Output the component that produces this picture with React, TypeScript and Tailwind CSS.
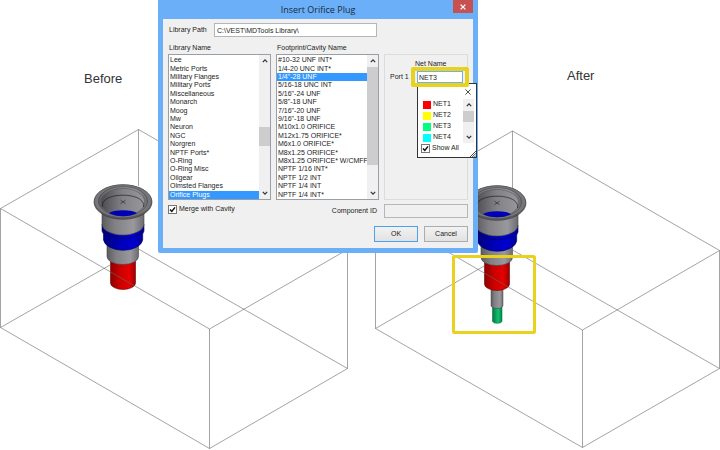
import { useState } from "react";

const libraries = [
  "Lee",
  "Metric Ports",
  "Military Flanges",
  "Military Ports",
  "Miscellaneous",
  "Monarch",
  "Moog",
  "Mw",
  "Neuron",
  "NGC",
  "Norgren",
  "NPTF Ports*",
  "O-Ring",
  "O-Ring Misc",
  "Oilgear",
  "Olmsted Flanges",
  "Orifice Plugs",
];

const footprints = [
  "#10-32 UNF INT*",
  "1/4-20 UNC INT*",
  "1/4\"-28 UNF",
  "5/16-18 UNC INT",
  "5/16\"-24 UNF",
  "5/8\"-18 UNF",
  "7/16\"-20 UNF",
  "9/16\"-18 UNF",
  "M10x1.0 ORIFICE",
  "M12x1.75 ORIFICE*",
  "M6x1.0 ORIFICE*",
  "M8x1.25 ORIFICE*",
  "M8x1.25 ORIFICE* W/CMFF",
  "NPTF 1/16 INT*",
  "NPTF 1/2 INT",
  "NPTF 1/4 INT",
  "NPTF 1/4 INT*",
];

const nets = [
  { name: "NET1", swatch: "bg-[#ff0000]" },
  { name: "NET2", swatch: "bg-[#ffff00]" },
  { name: "NET3", swatch: "bg-[#00ff80]" },
  { name: "NET4", swatch: "bg-[#00ffff]" },
];

const Chevron = ({ down = false }: { down?: boolean }) => (
  <svg viewBox="0 0 10 10" className="h-[10px] w-[10px]" fill="none" stroke="#333" strokeWidth="1.2">
    <path d={down ? "M2.8 3.8 5 6.2 7.2 3.8" : "M2.8 6.2 5 3.8 7.2 6.2"} />
  </svg>
);

const Scrollbar = ({ before, thumb }: { before: string; thumb: string }) => (
  <div className="flex w-[11px] shrink-0 flex-col items-center bg-[#f0f0f0]">
    <button type="button" aria-label="Scroll up" className="flex h-3 items-center">
      <Chevron />
    </button>
    <div className={before} />
    <div className={`w-full bg-[#cdcdcd] ${thumb}`} />
    <div className="flex-1" />
    <button type="button" aria-label="Scroll down" className="flex h-3 items-center">
      <Chevron down />
    </button>
  </div>
);

type ListBoxProps = {
  label: string;
  items: string[];
  initial: string;
  before: string;
  thumb: string;
};

const ListBox = ({ label, items, initial, before, thumb }: ListBoxProps) => {
  const [selected, setSelected] = useState(initial);

  return (
    <div className="min-w-0">
      <h2 className="h-[13px] px-px leading-[13px]">{label}</h2>
      <div className="flex h-[146px] border border-[#9a9ea6] bg-white">
        <ul role="listbox" aria-label={label} className="flex min-w-0 flex-1 flex-col pt-px">
          {items.map((item) => (
            <li
              key={item}
              role="option"
              aria-selected={item === selected}
              onClick={() => setSelected(item)}
              className={`flex min-h-0 flex-1 items-center overflow-hidden pl-px leading-[8px] whitespace-nowrap ${
                item === selected ? "bg-[#3399ff] text-white" : ""
              }`}
            >
              {item}
            </li>
          ))}
        </ul>
        <Scrollbar before={before} thumb={thumb} />
      </div>
    </div>
  );
};

const CheckBox = ({ label }: { label: string }) => (
  <label className="flex items-center gap-[2px]">
    <span className="grid h-[9px] w-[9px] place-items-center">
      <input
        type="checkbox"
        defaultChecked
        className="peer col-start-1 row-start-1 h-[9px] w-[9px] appearance-none border border-[#777] bg-white"
      />
      <svg
        viewBox="0 0 9 9"
        className="pointer-events-none invisible col-start-1 row-start-1 h-[9px] w-[9px] peer-checked:visible"
        fill="none"
        stroke="#111"
        strokeWidth="1.5"
      >
        <path d="M2 4.4 3.8 6.4 7 2.4" />
      </svg>
    </span>
    {label}
  </label>
);

const NetPopup = () => (
  <div className="absolute top-full left-0 flex h-[75px] w-[60px] flex-col border border-[#333] bg-white">
    <button type="button" aria-label="Close" className="mr-[5px] flex h-[15px] items-center self-end">
      <svg viewBox="0 0 6 6" className="h-[6px] w-[6px]" stroke="#222" strokeWidth="0.8">
        <path d="M0.4 0.4 5.6 5.6M5.6 0.4 0.4 5.6" />
      </svg>
    </button>
    <div className="flex h-11 pr-[2px] pl-[5px]">
      <ul className="flex-1">
        {nets.map((net) => (
          <li key={net.name} className="flex h-[11px] items-center gap-[2px]">
            <span className={`h-2 w-2 ${net.swatch}`} />
            {net.name}
          </li>
        ))}
      </ul>
      <Scrollbar before="h-0" thumb="h-[11px]" />
    </div>
    <div className="flex flex-1 items-center pb-[3px] pl-[3px]">
      <CheckBox label="Show All" />
    </div>
    <svg viewBox="0 0 6 6" className="absolute right-0 bottom-0 h-[6px] w-[6px]" stroke="#333" strokeWidth="0.9">
      <path d="M0 6 6 0M2.2 6 6 2.2M4.4 6 6 4.4" />
    </svg>
  </div>
);

const InsertDialog = () => (
  <section
    role="dialog"
    aria-label="Insert Orifice Plug"
    className="absolute top-0 left-[158px] w-80 rounded-b-[2px] bg-[#6aaff7] px-[5px] pb-[5px] text-[7px] text-[#1c1c1c]"
  >
    <header className="relative flex h-[19px] items-center justify-center">
      <h1 className="font-['Open_Sans','Noto_Sans',sans-serif] text-[9px] text-[#1b2a3c]">Insert Orifice Plug</h1>
      <button
        type="button"
        aria-label="Close dialog"
        className="absolute top-0 right-0 flex h-[13px] w-5 items-center justify-center bg-[#c75050]"
      >
        <svg viewBox="0 0 6 6" className="h-[6px] w-[6px]" stroke="#fff" strokeWidth="1.3">
          <path d="M0.6 0.6 5.4 5.4M5.4 0.6 0.6 5.4" />
        </svg>
      </button>
    </header>

    <form className="bg-[#f0f0f0] px-[5px] pt-1 pb-[6px]" onSubmit={(e) => e.preventDefault()}>
      <div className="flex h-[14px] items-center pl-px">
        <label htmlFor="path" className="w-[45px]">
          Library Path
        </label>
        <input
          id="path"
          defaultValue="C:\VEST\MDTools Library\"
          className="h-[14px] w-[163px] border border-[#b4b6ba] bg-white px-[2px]"
        />
      </div>

      <div className="mt-1 grid grid-cols-[103px_103px_1fr] gap-[5px]">
        <ListBox
          label="Library Name"
          items={libraries}
          initial="Orifice Plugs"
          before="h-[60px]"
          thumb="h-[19px]"
        />
        <ListBox
          label="Footprint/Cavity Name"
          items={footprints}
          initial={"1/4\"-28 UNF"}
          before="h-0"
          thumb="h-[98px]"
        />
        <div className="mt-[13px] border border-[#dcdcdc] pt-1 pr-1 pl-[5px]">
          <p className="pr-1 pl-[25px] leading-[10px]">Net Name</p>
          <div className="mt-[2px] flex items-center">
            <label htmlFor="port" className="w-[27px]">
              Port 1
            </label>
            <div className="relative flex-1">
              <input
                id="port"
                defaultValue="NET3"
                className="block h-3 w-full border border-[#6aaff7] bg-white px-px"
              />
              <NetPopup />
              <div className="pointer-events-none absolute -inset-x-[6px] -inset-y-1 rounded-[2px] border-4 border-[#e8d21d]" />
            </div>
          </div>
        </div>
      </div>

      <div className="mt-1 flex items-start justify-between">
        <CheckBox label="Merge with Cavity" />
        <div className="flex items-center gap-[7px]">
          <label htmlFor="component">Component ID</label>
          <input id="component" className="h-[14px] w-[84px] border border-[#b4b6ba] bg-[#f0f0f0] px-[2px]" />
        </div>
      </div>

      <div className="mt-2 flex justify-end gap-[6px]">
        <button
          type="submit"
          className="h-4 w-11 border border-[#4ba0f0] bg-linear-to-b from-[#f2f2f2] to-[#e2e2e2]"
        >
          OK
        </button>
        <button
          type="button"
          className="h-4 w-11 border border-[#acacac] bg-linear-to-b from-[#f2f2f2] to-[#e2e2e2]"
        >
          Cancel
        </button>
      </div>
    </form>
  </section>
);

const Gradients = () => (
  <defs>
    <linearGradient id="steel">
      <stop offset="0" stopColor="#5c5c60" />
      <stop offset="0.3" stopColor="#808085" />
      <stop offset="0.75" stopColor="#99999d" />
      <stop offset="1" stopColor="#6c6c70" />
    </linearGradient>
    <linearGradient id="bore">
      <stop offset="0" stopColor="#4c4c50" />
      <stop offset="0.5" stopColor="#828287" />
      <stop offset="1" stopColor="#98989c" />
    </linearGradient>
    <linearGradient id="blue">
      <stop offset="0" stopColor="#000078" />
      <stop offset="0.4" stopColor="#0000b4" />
      <stop offset="0.75" stopColor="#0000d0" />
      <stop offset="1" stopColor="#000090" />
    </linearGradient>
    <linearGradient id="red">
      <stop offset="0" stopColor="#8c0000" />
      <stop offset="0.35" stopColor="#c80000" />
      <stop offset="0.75" stopColor="#e60000" />
      <stop offset="1" stopColor="#9a0000" />
    </linearGradient>
    <linearGradient id="green">
      <stop offset="0" stopColor="#007a40" />
      <stop offset="0.6" stopColor="#10c070" />
      <stop offset="1" stopColor="#008a4a" />
    </linearGradient>
  </defs>
);

// Stepped cavity, widest part first at the top; centred on x = 123
const Cavity = () => (
  <g strokeWidth="0.6">
    <path d="M110.5 258V283A12.5 6.5 0 0 0 135.5 283V258Z" fill="url(#red)" stroke="#700000" />
    <path d="M107 245V256.5A15.7 8 0 0 0 138.5 256.5V245Z" fill="url(#steel)" stroke="#444" />
    <path
      d="M102 224V231L103.5 234V240A19.7 11.5 0 0 0 142.7 240V234L144 231V224Z"
      fill="url(#blue)"
      stroke="#000060"
    />
    <path d="M103 231A21 11 0 0 0 143 231" fill="none" stroke="#000050" />
    <path d="M102 208V224A21 11 0 0 0 144 224V208Z" fill="url(#steel)" stroke="#444" />
    <ellipse cx="123" cy="202" rx="29" ry="17.3" fill="#5c5c60" stroke="#333" />
    <ellipse cx="123" cy="201.2" rx="28.6" ry="16.4" fill="#77777b" stroke="#4a4a4a" strokeWidth="0.4" />
    <ellipse cx="123" cy="201.2" rx="24.5" ry="14.6" fill="url(#steel)" stroke="#3a3a3a" strokeWidth="0.5" />
    <ellipse cx="123" cy="202" rx="21.8" ry="13.6" fill="url(#bore)" stroke="#4a4a4a" strokeWidth="0.5" />
    <path d="M102.5 207C101 199.500 111 195.200 123 195.200S145 199.500 143.500 207" fill="none" stroke="#111" />
    <path d="M109 213.200A14.500 4 0 0 1 137 213.200A22 13 0 0 1 109 213.200Z" fill="#0000b4" />
    <path d="M120.5 200.2 125.5 203.700M125.5 200.2 120.5 203.700" stroke="#222" />
  </g>
);

const App = () => {
  return (
    <main className="relative grid min-h-screen grid-cols-2 content-start overflow-hidden bg-white font-['Liberation_Sans',Arial,sans-serif]">
      <figure className="min-w-0">
        <figcaption className="h-[120px] pt-[69px] pl-[84px] text-[13px] leading-[20px] text-[#333]">Before</figcaption>
        <svg viewBox="0 120 360 330" className="block w-full" role="img" aria-label="Block before inserting the plug">
          <Gradients />
          <Cavity />
          <g fill="none" stroke="#666" strokeWidth="0.6">
            <path d="M138.5 129.5 0.5 208.5V327.5L209.5 448.5 347.5 368.5V249.5Z" />
            <path d="M0.5 208.5 209.5 329 347.5 249.5M209.5 329V448.5" />
            <path d="M138.5 129.5V186M138.5 249 347.5 368.5M110 265 0.5 327.5" />
          </g>
        </svg>
      </figure>

      <figure className="min-w-0">
        <figcaption className="h-[120px] pt-[66px] pl-[207px] text-[13px] leading-[20px] text-[#333]">After</figcaption>
        <svg viewBox="360 120 360 330" className="block w-full" role="img" aria-label="Block after inserting the plug">
          <path d="M492.5 300V321.5A5 2.7 0 0 0 502 321.5V300Z" fill="url(#green)" stroke="#006030" strokeWidth="0.5" />
          <path d="M491 285V305.5A6 3 0 0 0 503 305.5V285Z" fill="url(#steel)" stroke="#444" strokeWidth="0.5" />
          <g transform="translate(374 1)">
            <Cavity />
          </g>
          <g fill="none" stroke="#666" strokeWidth="0.6">
            <path d="M512.5 131 375.5 210V328.5L582.5 447.5 719.5 368.5V250.5Z" />
            <path d="M375.5 210 582.5 330 719.5 250.5M582.5 330V447.5" />
            <path d="M512.5 131V188M512.5 250 719.5 368.5M485 265.5 375.5 328.5" />
          </g>
          <rect x="453.5" y="256.5" width="81" height="76" rx="1" fill="none" stroke="#e8d21d" strokeWidth="3" />
        </svg>
      </figure>

      <InsertDialog />
    </main>
  );
};

export default App;
